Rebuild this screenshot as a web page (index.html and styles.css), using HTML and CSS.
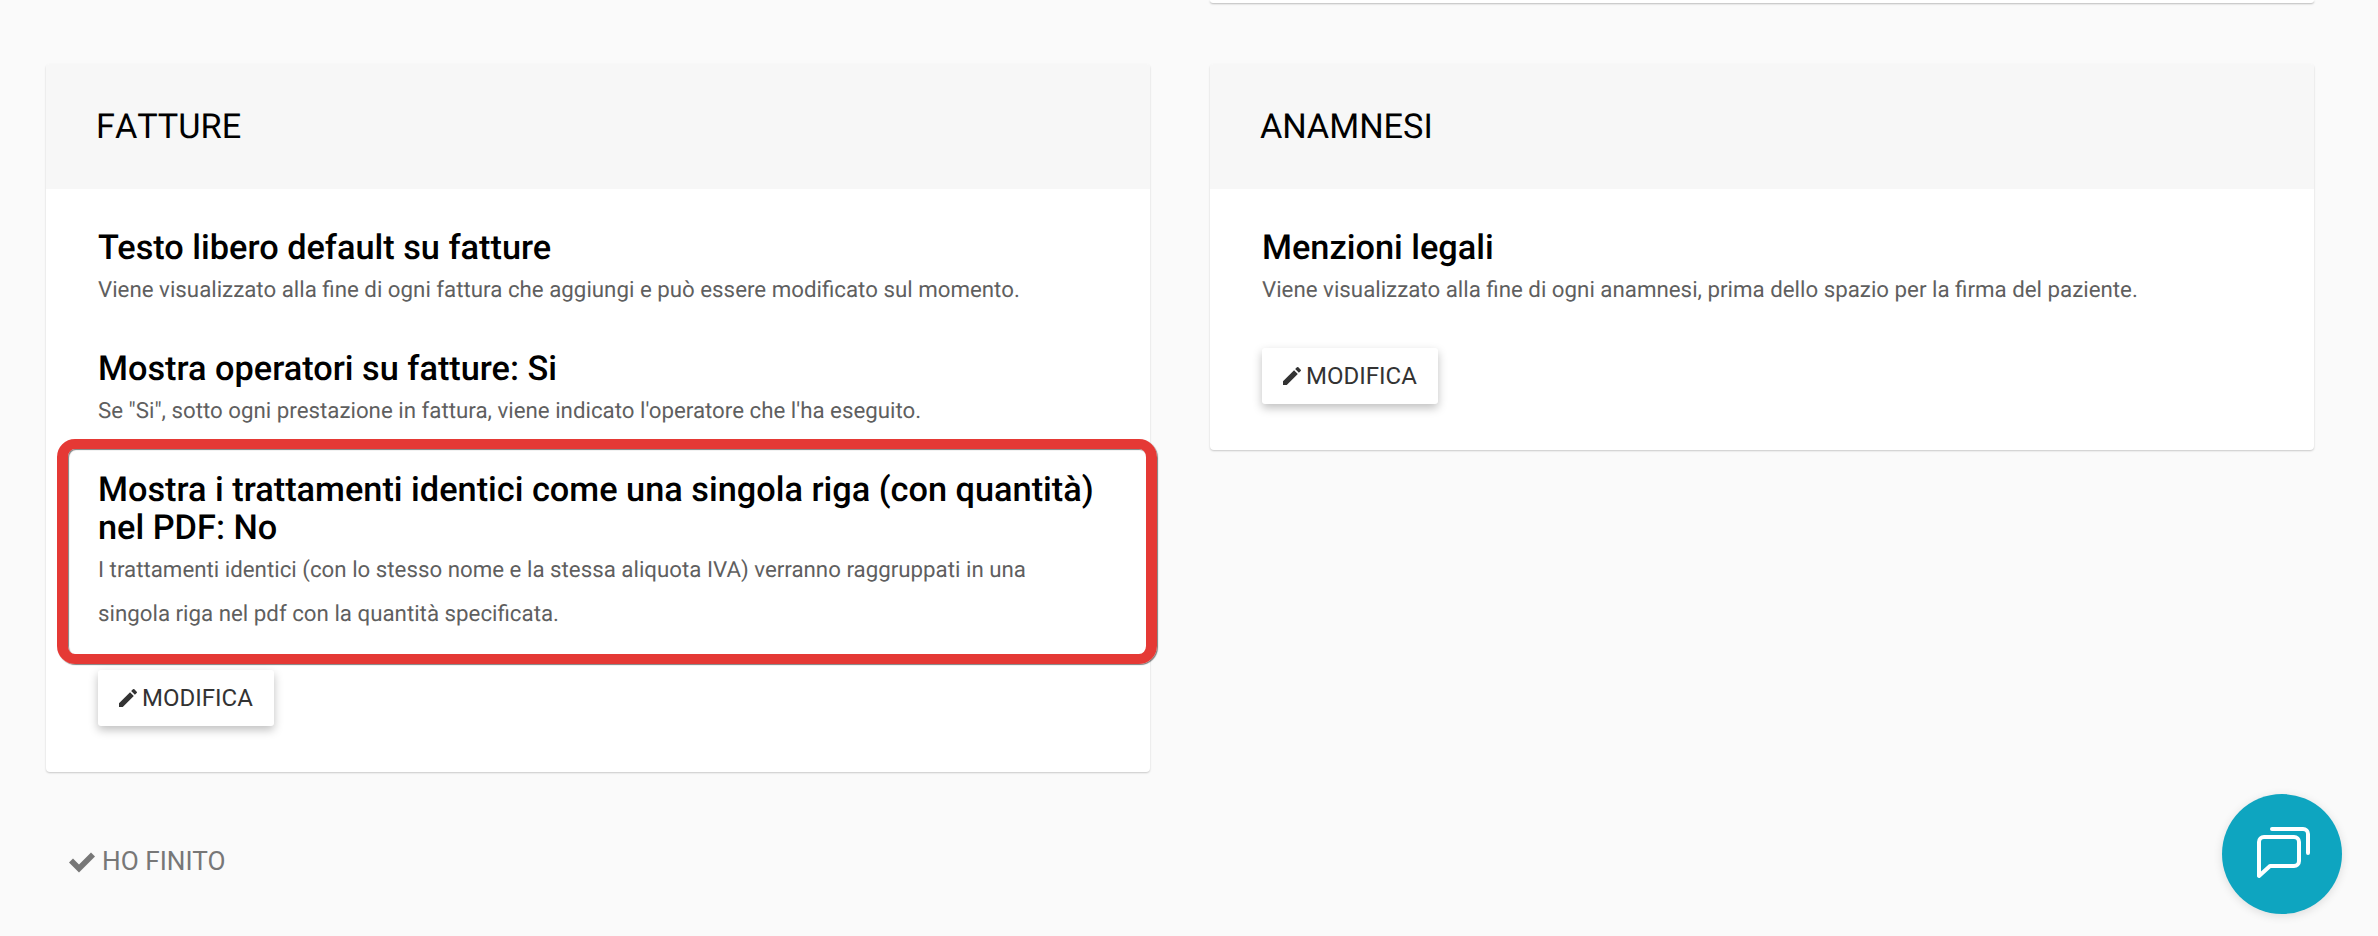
FILE: index.html
```html
<!DOCTYPE html>
<html lang="it">
	<head>
		<meta charset="utf-8">
		<title>Impostazioni</title>
		<link rel="stylesheet" href="styles.css">
	</head>
	<body>
		<div class="columns">
			<div class="card-end"></div>
			<section class="card">
				<h2 class="card-title">FATTURE</h2>
				<div class="card-body">
					<div class="setting">
						<h3>Testo libero default su fatture</h3>
						<p>Viene visualizzato alla fine di ogni fattura che aggiungi e può essere modificato sul momento.</p>
					</div>
					<div class="setting">
						<h3>Mostra operatori su fatture: Si</h3>
						<p>Se "Si", sotto ogni prestazione in fattura, viene indicato l'operatore che l'ha eseguito.</p>
					</div>
					<div class="setting marked">
						<h3>Mostra i trattamenti identici come una singola riga (con quantità) nel PDF: No</h3>
						<p>I trattamenti identici (con lo stesso nome e la stessa aliquota IVA) verranno raggruppati in una singola riga nel pdf con la quantità specificata.</p>
						<div class="red-box"></div>
					</div>
					<button class="edit">
						<svg viewBox="0 0 24 24"><path d="M3 17.25V21h3.75L17.81 9.94l-3.75-3.75L3 17.25zM20.71 7.04a1 1 0 0 0 0-1.41l-2.34-2.34a1 1 0 0 0-1.41 0l-1.83 1.83 3.75 3.75 1.83-1.83z"/></svg>
						MODIFICA
					</button>
				</div>
			</section>
			<section class="card">
				<h2 class="card-title">ANAMNESI</h2>
				<div class="card-body">
					<div class="setting legal">
						<h3>Menzioni legali</h3>
						<p>Viene visualizzato alla fine di ogni anamnesi, prima dello spazio per la firma del paziente.</p>
					</div>
					<button class="edit">
						<svg viewBox="0 0 24 24"><path d="M3 17.25V21h3.75L17.81 9.94l-3.75-3.75L3 17.25zM20.71 7.04a1 1 0 0 0 0-1.41l-2.34-2.34a1 1 0 0 0-1.41 0l-1.83 1.83 3.75 3.75 1.83-1.83z"/></svg>
						MODIFICA
					</button>
				</div>
			</section>
		</div>
		<button class="done">
			<svg viewBox="0 0 28 24"><path d="M1 13.500 5 9.500l6 6L23 3.500l4 4L11 23.500z"/></svg>
			HO FINITO
		</button>
		<button class="chat">
			<svg viewBox="0 0 56 56" fill="none" stroke="#fff" stroke-width="4" stroke-linecap="round" stroke-linejoin="round">
				<path d="M5 16a5 5 0 0 1 5-5h30a5 5 0 0 1 5 5v19a5 5 0 0 1-5 5H16L5 50z"/>
				<path d="M18 3h31a5 5 0 0 1 5 5v19"/>
			</svg>
		</button>
	</body>
</html>
```

FILE: styles.css
```css
html, body
{
	margin: 0;
	height: 100%;
}
body
{
	background-color: #fafafa;
	font-family: Roboto, "Liberation Sans", sans-serif;
	text-rendering: geometricPrecision;
	overflow: hidden;
	position: relative;
}
.columns
{
	display: grid;
	grid-template-columns: 1104px 1104px;
	grid-template-rows: 3px auto;
	column-gap: 60px;
	row-gap: 61px;
	align-items: start;
	padding-left: 46px;
}
.card-end
{
	grid-column: 2;
	height: 3px;
	background-color: #fff;
	border-radius: 0 0 4px 4px;
	box-shadow: 0 1px 2px rgba(0,0,0,.25);
}
.card
{
	grid-row: 2;
	background-color: #fff;
	border-radius: 4px;
	box-shadow: 0 1px 2px rgba(0,0,0,.2);
}
.card-title
{
	margin: 0;
	padding: 0 50px;
	height: 125px;
	line-height: 126px;
	font-size: 34.3px;
	font-weight: 400;
	font-kerning: none;
	color: #000;
	background-color: #f7f7f7;
	border-radius: 4px 4px 0 0;
}
.card-body
{
	padding: 40px 52px 46px;
}
.setting
{
	margin-bottom: 38px;
}
.setting h3
{
	margin: 0;
	font-size: 34.3px;
	line-height: 38px;
	font-weight: 500;
	color: #000;
}
.setting p
{
	margin: 1px 0 0;
	font-size: 22.3px;
	line-height: 44px;
	color: #5f5f5f;
}
.setting.marked
{
	position: relative;
	margin-bottom: 0;
}
.setting.legal
{
	margin-bottom: 36px;
}
.red-box
{
	position: absolute;
	left: -41px;
	right: -59px;
	top: -32px;
	bottom: -28px;
	border: 10px solid #e53935;
	border-left-width: 11px;
	border-right-width: 11px;
	border-radius: 18px;
	box-shadow: 1px 1px 1px rgba(0,0,0,.5), inset 1px 1px 1px rgba(0,0,0,.5);
}
.edit
{
	display: flex;
	align-items: center;
	gap: 2px;
	height: 56px;
	width: 176px;
	padding: 0 0 0 18px;
	margin-top: 20px;
	border: 0;
	border-radius: 3px;
	background-color: #fff;
	box-shadow: 0 4px 10px rgba(0,0,0,.25);
	font-family: inherit;
	font-size: 24px;
	color: #333;
}
.setting.marked + .edit
{
	margin-top: 34px;
}
.edit svg
{
	width: 24px;
	height: 24px;
	fill: #333;
}
.done
{
	display: flex;
	align-items: center;
	gap: 6px;
	margin: 74px 0 0 68px;
	padding: 0;
	border: 0;
	background: none;
	font-family: inherit;
	font-size: 26.2px;
	color: #777;
}
.done svg
{
	width: 28px;
	height: 24px;
	fill: #777;
}
.chat
{
	position: absolute;
	left: 2222px;
	top: 794px;
	width: 120px;
	height: 120px;
	padding: 0;
	border: 0;
	border-radius: 50%;
	background-color: #0ea5c0;
	box-shadow: 0 2px 10px rgba(0,0,0,.12);
	display: flex;
	align-items: center;
	justify-content: center;
}
.chat svg
{
	width: 56px;
	height: 56px;
	overflow: visible;
}
```
